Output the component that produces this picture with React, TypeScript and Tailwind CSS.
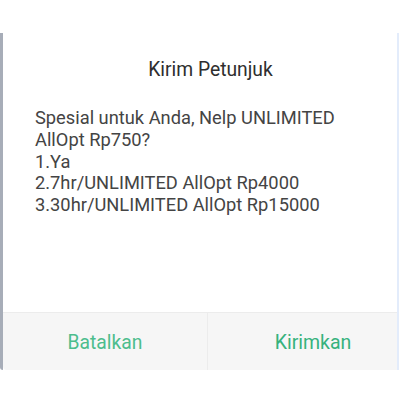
import React from 'react';

const lines = [
  'Spesial untuk Anda, Nelp UNLIMITED',
  'AllOpt Rp750?',
  '1.Ya',
  '2.7hr/UNLIMITED AllOpt Rp4000',
  '3.30hr/UNLIMITED AllOpt Rp15000',
];

const App: React.FC = () => {
  return (
    <div className="w-[400px] h-[400px] bg-white pt-[33px] font-['Roboto','Noto_Sans',sans-serif]">
      <div className="flex w-[399px] h-[337px]">
        {/* sisi kiri abu-abu dari layar di belakang */}
        <div className="w-[3px] bg-[#a7adb8] rounded-bl-[6px]" />
        {/* dialog lebih lebar dari layar, terpotong di kanan */}
        <div className="flex-1 overflow-hidden rounded-bl-[4px]">
          <div className="w-[415px] h-full flex flex-col bg-white">
            <div className="flex-1 flex flex-col">
              <h1 className="text-center text-[19.3px] leading-[24px] text-[#2e2e2e] pt-[25px]">
                Kirim Petunjuk
              </h1>
              <div className="pl-[32px] pt-[25px] text-[18.3px] leading-[21.8px] text-[#444]">
                {lines.map((l) => (
                  <div key={l}>{l}</div>
                ))}
              </div>
            </div>
            <div className="h-[58px] flex bg-[#f6f6f6] border-t border-[#ececec]">
              <button className="w-[205px] pt-[3px] text-[19.3px] text-[#4cbd8d] border-r border-[#ececec]">
                Batalkan
              </button>
              <button className="flex-1 pt-[3px] text-[19.5px] text-[#36b27d]">
                Kirimkan
              </button>
            </div>
          </div>
        </div>
        <div className="w-[2px] bg-[#e3ecfb]" />
      </div>
    </div>
  );
};

export default App;
